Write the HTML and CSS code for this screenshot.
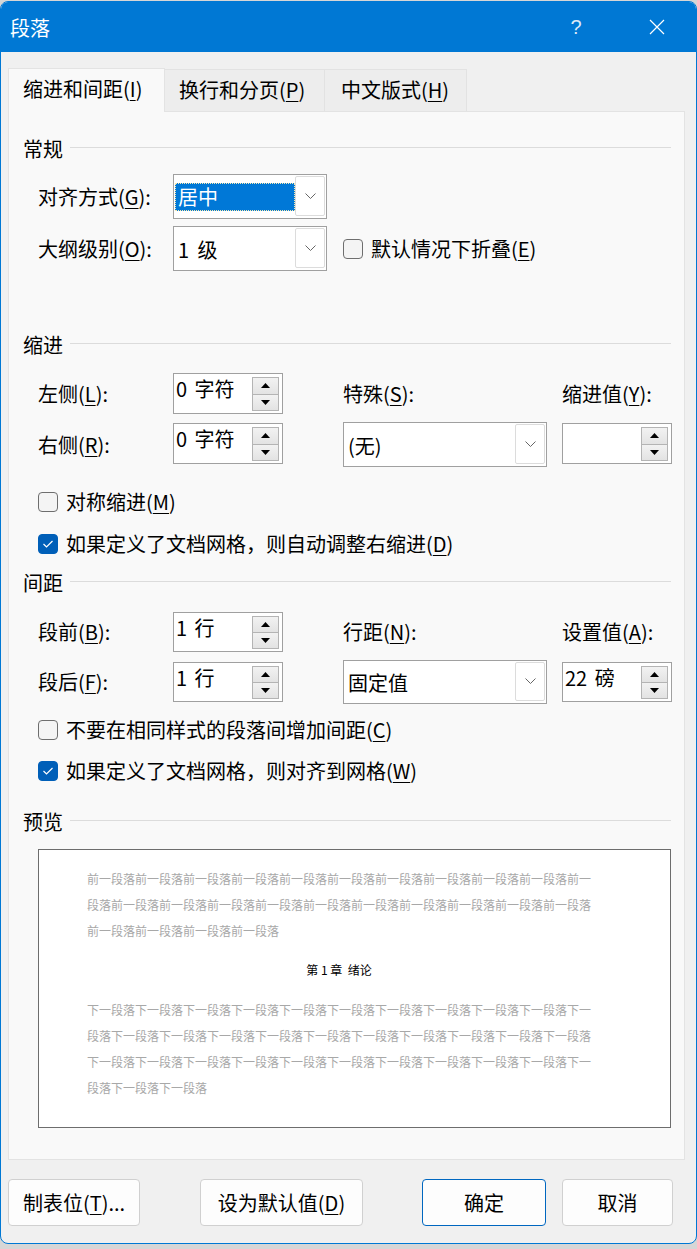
FILE: index.html
```html
<!DOCTYPE html>
<html lang="zh-CN">
<head>
    <meta charset="UTF-8">
    <title>段落</title>
    <link rel="stylesheet" href="styles.css">
</head>
<body>

    <div class="window">
        <!-- タイトルバー -->
        <div class="titlebar">
            <span class="title">段落</span>
            <span class="help">?</span>
            <span class="close">
                <svg width="16" height="16" viewBox="0 0 16 16"><path d="M1 1 L15 15 M15 1 L1 15" stroke="#fff" stroke-width="1.2" fill="none"/></svg>
            </span>
        </div>

        <!-- タブ -->
        <div class="tabs">
            <div class="tab tab-1 active">缩进和间距(<u>I</u>)</div>
            <div class="tab tab-2">换行和分页(<u>P</u>)</div>
            <div class="tab tab-3">中文版式(<u>H</u>)</div>
        </div>

        <div class="panel">
            <!-- 常规 -->
            <div class="section-title">常规</div>
            <div class="general">
                <label>对齐方式(<u>G</u>):</label>
                <div class="combo">
                    <span class="combo-text"><span class="selected">居中</span></span>
                    <span class="combo-btn"><svg width="11" height="7" viewBox="0 0 11 7"><polyline points="0.5,0.5 5.5,5.5 10.5,0.5" fill="none" stroke="#666" stroke-width="1"/></svg></span>
                </div>
                <span></span>

                <label>大纲级别(<u>O</u>):</label>
                <div class="combo">
                    <span class="combo-text">1 级</span>
                    <span class="combo-btn"><svg width="11" height="7" viewBox="0 0 11 7"><polyline points="0.5,0.5 5.5,5.5 10.5,0.5" fill="none" stroke="#666" stroke-width="1"/></svg></span>
                </div>
                <div class="check">
                    <span class="box"></span>
                    <span>默认情况下折叠(<u>E</u>)</span>
                </div>
            </div>

            <!-- 缩进 -->
            <div class="section-title gap-indent">缩进</div>
            <div class="fields fields-indent">
                <label>左侧(<u>L</u>):</label>
                <div class="spin">
                    <span class="spin-text">0 字符</span>
                    <span class="spin-btns">
                        <span class="spin-btn"><svg width="9" height="5" viewBox="0 0 9 5"><polygon points="0,5 4.5,0 9,5" fill="#000"/></svg></span>
                        <span class="spin-btn"><svg width="9" height="5" viewBox="0 0 9 5"><polygon points="0,0 4.5,5 9,0" fill="#000"/></svg></span>
                    </span>
                </div>
                <label>特殊(<u>S</u>):</label>
                <label>缩进值(<u>Y</u>):</label>

                <label>右侧(<u>R</u>):</label>
                <div class="spin spin-low">
                    <span class="spin-text">0 字符</span>
                    <span class="spin-btns">
                        <span class="spin-btn"><svg width="9" height="5" viewBox="0 0 9 5"><polygon points="0,5 4.5,0 9,5" fill="#000"/></svg></span>
                        <span class="spin-btn"><svg width="9" height="5" viewBox="0 0 9 5"><polygon points="0,0 4.5,5 9,0" fill="#000"/></svg></span>
                    </span>
                </div>
                <div class="combo combo-wide">
                    <span class="combo-text">(无)</span>
                    <span class="combo-btn"><svg width="11" height="7" viewBox="0 0 11 7"><polyline points="0.5,0.5 5.5,5.5 10.5,0.5" fill="none" stroke="#666" stroke-width="1"/></svg></span>
                </div>
                <div class="spin spin-low">
                    <span class="spin-text"></span>
                    <span class="spin-btns">
                        <span class="spin-btn"><svg width="9" height="5" viewBox="0 0 9 5"><polygon points="0,5 4.5,0 9,5" fill="#000"/></svg></span>
                        <span class="spin-btn"><svg width="9" height="5" viewBox="0 0 9 5"><polygon points="0,0 4.5,5 9,0" fill="#000"/></svg></span>
                    </span>
                </div>
            </div>

            <div class="check check-row gap-21">
                <span class="box"></span>
                <span>对称缩进(<u>M</u>)</span>
            </div>
            <div class="check check-row gap-14">
                <span class="box checked"><svg width="12" height="10" viewBox="0 0 12 10"><polyline points="1.5,5 4.5,8 10.5,2" fill="none" stroke="#fff" stroke-width="1.2"/></svg></span>
                <span>如果定义了文档网格，则自动调整右缩进(<u>D</u>)</span>
            </div>

            <!-- 间距 -->
            <div class="section-title gap-11">间距</div>
            <div class="fields fields-spacing">
                <label>段前(<u>B</u>):</label>
                <div class="spin">
                    <span class="spin-text">1 行</span>
                    <span class="spin-btns">
                        <span class="spin-btn"><svg width="9" height="5" viewBox="0 0 9 5"><polygon points="0,5 4.5,0 9,5" fill="#000"/></svg></span>
                        <span class="spin-btn"><svg width="9" height="5" viewBox="0 0 9 5"><polygon points="0,0 4.5,5 9,0" fill="#000"/></svg></span>
                    </span>
                </div>
                <label>行距(<u>N</u>):</label>
                <label>设置值(<u>A</u>):</label>

                <label>段后(<u>F</u>):</label>
                <div class="spin spin-low2">
                    <span class="spin-text">1 行</span>
                    <span class="spin-btns">
                        <span class="spin-btn"><svg width="9" height="5" viewBox="0 0 9 5"><polygon points="0,5 4.5,0 9,5" fill="#000"/></svg></span>
                        <span class="spin-btn"><svg width="9" height="5" viewBox="0 0 9 5"><polygon points="0,0 4.5,5 9,0" fill="#000"/></svg></span>
                    </span>
                </div>
                <div class="combo combo-wide">
                    <span class="combo-text">固定值</span>
                    <span class="combo-btn"><svg width="11" height="7" viewBox="0 0 11 7"><polyline points="0.5,0.5 5.5,5.5 10.5,0.5" fill="none" stroke="#666" stroke-width="1"/></svg></span>
                </div>
                <div class="spin spin-low2">
                    <span class="spin-text">22 磅</span>
                    <span class="spin-btns">
                        <span class="spin-btn"><svg width="9" height="5" viewBox="0 0 9 5"><polygon points="0,5 4.5,0 9,5" fill="#000"/></svg></span>
                        <span class="spin-btn"><svg width="9" height="5" viewBox="0 0 9 5"><polygon points="0,0 4.5,5 9,0" fill="#000"/></svg></span>
                    </span>
                </div>
            </div>

            <div class="check check-row gap-12">
                <span class="box"></span>
                <span>不要在相同样式的段落间增加间距(<u>C</u>)</span>
            </div>
            <div class="check check-row gap-13">
                <span class="box checked"><svg width="12" height="10" viewBox="0 0 12 10"><polyline points="1.5,5 4.5,8 10.5,2" fill="none" stroke="#fff" stroke-width="1.2"/></svg></span>
                <span>如果定义了文档网格，则对齐到网格(<u>W</u>)</span>
            </div>

            <!-- 预览 -->
            <div class="section-title gap-23">预览</div>
            <div class="preview">
                <div class="preview-text">前一段落前一段落前一段落前一段落前一段落前一段落前一段落前一段落前一段落前一段落前一段落前一段落前一段落前一段落前一段落前一段落前一段落前一段落前一段落前一段落前一段落前一段落前一段落前一段落前一段落</div>
                <div class="preview-heading">第 1 章&nbsp; 绪论</div>
                <div class="preview-text">下一段落下一段落下一段落下一段落下一段落下一段落下一段落下一段落下一段落下一段落下一段落下一段落下一段落下一段落下一段落下一段落下一段落下一段落下一段落下一段落下一段落下一段落下一段落下一段落下一段落下一段落下一段落下一段落下一段落下一段落下一段落下一段落下一段落下一段落</div>
            </div>
        </div>

        <!-- ボタン -->
        <div class="footer">
            <button class="btn btn-tabs">制表位(<u>T</u>)...</button>
            <button class="btn btn-default">设为默认值(<u>D</u>)</button>
            <button class="btn btn-ok">确定</button>
            <button class="btn btn-cancel">取消</button>
        </div>
    </div>

</body>
</html>
```

FILE: styles.css
```css
/* ベース */
body {
    margin: 0;
    padding-top: 1px;
    background: #d6d6d6;
    font-family: "Noto Sans CJK SC", "Noto Sans", sans-serif;
    color: #000;
}

u {
    text-decoration-thickness: 1px;
    text-underline-offset: 3px;
}

/* ウィンドウ */
.window {
    height: 1243px;
    box-sizing: border-box;
    background: #f0f0f0;
    border: 1px solid #0078d4;
    border-radius: 8px;
    overflow: hidden;
    display: flex;
    flex-direction: column;
}

/* タイトルバー */
.titlebar {
    height: 50px;
    flex: none;
    display: flex;
    align-items: center;
    background: #0078d4;
    color: #fff;
    padding-left: 9px;
}
.titlebar .title {
    font-size: 20px;
}
.titlebar .help {
    margin-left: auto;
    width: 46px;
    text-align: center;
    font-size: 20px;
    color: #dce9f6;
    font-family: "Liberation Sans", sans-serif;
}
.titlebar .close {
    width: 46px;
    margin-left: 35px;
    margin-right: 16px;
    display: flex;
    justify-content: center;
}

/* タブ */
.tabs {
    display: flex;
    margin-top: 16px;
    padding-left: 7px;
    height: 43px;
    flex: none;
    position: relative;
    z-index: 1;
}
.tab {
    box-sizing: border-box;
    height: 42px;
    margin-top: 1px;
    padding-left: 14px;
    font-size: 20px;
    line-height: 40px;
    background: #ededed;
    border: 1px solid #e2e2e2;
    border-bottom: none;
}
.tab.active {
    height: 44px;
    margin-top: 0;
    background: #f9f9f9;
    border-color: #e3e3e3;
}
.tab-1 { width: 157px; }
.tab-2 { width: 160px; border-left: none; }
.tab-3 { width: 142px; border-left: none; padding-left: 16px; }

/* パネル */
.panel {
    margin: 0 11px 0 7px;
    padding: 23px 13px 31px 14px;
    background: #f9f9f9;
    border: 1px solid #e3e3e3;
}

/* セクション見出し */
.section-title {
    display: flex;
    align-items: center;
    gap: 7px;
    font-size: 20px;
    line-height: 28px;
}
.section-title::after {
    content: "";
    flex: 1;
    height: 1px;
    margin-top: -3px;
    background: #dcdcdc;
}
.gap-indent { margin-top: 60px; }
.gap-11 { margin-top: 11px; }
.gap-12 { margin-top: 12px; }
.gap-13 { margin-top: 13px; }
.gap-14 { margin-top: 14px; }
.gap-21 { margin-top: 21px; }
.gap-23 { margin-top: 23px; }

label {
    font-size: 20px;
    line-height: 28px;
    align-self: center;
}

/* 常规 */
.general {
    display: grid;
    grid-template-columns: 135px 170px auto;
    grid-template-rows: 45px 45px;
    row-gap: 7px;
    margin: 11px 0 0 15px;
}
.general .combo {
    width: 154px;
}

/* 缩进・间距 */
.fields {
    display: grid;
    grid-template-columns: 135px 170px 219px 110px;
    margin-left: 15px;
}
.fields-indent {
    grid-template-rows: 41px 45px;
    row-gap: 8px;
    margin-top: 14px;
}
.fields-spacing {
    grid-template-rows: 40px 44px;
    row-gap: 8px;
    margin-top: 15px;
}

/* コンボボックス */
.combo {
    display: flex;
    box-sizing: border-box;
    height: 45px;
    background: #fff;
    border: 1px solid #a0a0a0;
}
.combo-wide {
    width: 204px;
    height: 100%;
}
.combo-text {
    flex: 1;
    align-self: center;
    padding-left: 4px;
    margin-top: 2px;
    font-size: 20px;
    line-height: 28px;
    word-spacing: 4px;
}
.combo-text .selected {
    display: block;
    margin: -2px 0 0 -3px;
    padding-left: 3px;
    background: #0078d7;
    color: #fff;
    outline: 1px dotted #f7e9b0;
    outline-offset: -1px;
}
.combo-btn {
    width: 28px;
    margin: 1px 1px 2px 0;
    border: 1px solid #dcdcdc;
    border-radius: 2px;
    display: flex;
    align-items: center;
    justify-content: center;
}

/* スピンボックス */
.spin {
    display: flex;
    box-sizing: border-box;
    width: 110px;
    height: 41px;
    background: #fff;
    border: 1px solid #a0a0a0;
    align-self: start;
}
.spin-low { margin-top: 1px; }
.spin-low2 { margin-top: 2px; height: 40px; }
.fields-spacing .spin { height: 40px; }
.spin-text {
    flex: 1;
    padding: 1px 0 0 2px;
    font-size: 20px;
    line-height: 28px;
    word-spacing: 3px;
}
.spin-btns {
    width: 27px;
    margin: 3px 3px 2px 0;
    display: flex;
    flex-direction: column;
}
.spin-btn {
    flex: 1;
    display: flex;
    align-items: center;
    justify-content: center;
    background: linear-gradient(#f2f2f2, #e3e3e3);
    border: 1px solid #b4b4b4;
}
.spin-btn + .spin-btn {
    border-top: none;
}

/* チェックボックス */
.check {
    display: flex;
    align-items: center;
    gap: 8px;
    font-size: 20px;
    line-height: 28px;
    align-self: center;
}
.check-row {
    margin-left: 15px;
}
.box {
    width: 20px;
    height: 20px;
    box-sizing: border-box;
    border: 1px solid #6e6e6e;
    border-radius: 4px;
    background: #f4f4f4;
    display: flex;
    align-items: center;
    justify-content: center;
}
.box.checked {
    background: #005fb8;
    border-color: #005fb8;
}

/* プレビュー */
.preview {
    margin: 13px 0 0 15px;
    height: 279px;
    box-sizing: border-box;
    border: 1px solid #6d6d6d;
    background: #fff;
    padding: 16px 0 0 48px;
}
.preview-text {
    width: 505px;
    font-size: 12px;
    line-height: 26px;
    color: #a8a8a8;
}
.preview-heading {
    width: 504px;
    margin: 13px 0 14px;
    text-align: center;
    font-size: 12px;
    line-height: 26px;
}

/* フッターボタン */
.footer {
    display: flex;
    margin-top: 19px;
    padding: 0 23px 0 7px;
}
.btn {
    height: 47px;
    font-family: inherit;
    font-size: 20px;
    background: #fdfdfd;
    border: 1px solid #d0d0d0;
    border-radius: 4px;
    padding: 0;
    color: #000;
}
.btn-tabs { width: 132px; }
.btn-default { width: 163px; margin-left: 60px; }
.btn-ok {
    width: 124px;
    margin-left: auto;
    border-color: #0067c0;
}
.btn-cancel { width: 111px; margin-left: 16px; }
```
